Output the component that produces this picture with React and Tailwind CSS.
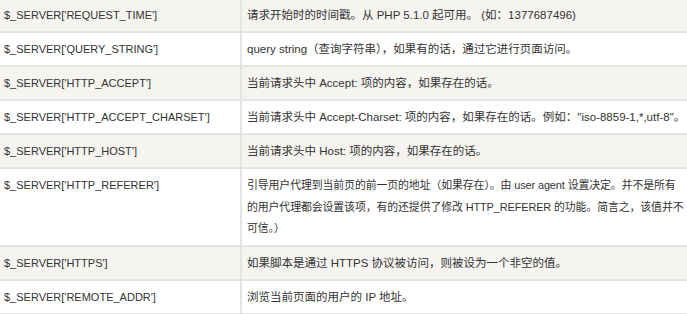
const rows = [
  { key: "$_SERVER['REQUEST_TIME']", desc: ['请求开始时的时间戳。从 PHP 5.1.0 起可用。 (如：1377687496)'] },
  { key: "$_SERVER['QUERY_STRING']", desc: ['query string（查询字符串），如果有的话，通过它进行页面访问。'] },
  { key: "$_SERVER['HTTP_ACCEPT']", desc: ['当前请求头中 Accept: 项的内容，如果存在的话。'] },
  { key: "$_SERVER['HTTP_ACCEPT_CHARSET']", desc: ['当前请求头中 Accept-Charset: 项的内容，如果存在的话。例如："iso-8859-1,*,utf-8"。'] },
  { key: "$_SERVER['HTTP_HOST']", desc: ['当前请求头中 Host: 项的内容，如果存在的话。'] },
  {
    key: "$_SERVER['HTTP_REFERER']",
    desc: [
      '引导用户代理到当前页的前一页的地址（如果存在）。由 user agent 设置决定。并不是所有',
      '的用户代理都会设置该项，有的还提供了修改 HTTP_REFERER 的功能。简言之，该值并不',
      '可信。）',
    ],
  },
  { key: "$_SERVER['HTTPS']", desc: ['如果脚本是通过 HTTPS 协议被访问，则被设为一个非空的值。'] },
  { key: "$_SERVER['REMOTE_ADDR']", desc: ['浏览当前页面的用户的 IP 地址。'] },
  { key: '', desc: [''] },
];

export default function App() {
  return (
    <main
      className="h-[314px] w-[687px] overflow-hidden bg-white text-[11px] text-[#333]"
      style={{ fontFamily: '"Liberation Sans", "Noto Sans CJK SC", sans-serif' }}
    >
      <div className="-mt-[1px]">
        {rows.map((row, index) => (
          <div
            key={index}
            className={`grid grid-cols-[242px_1fr] border-b-2 border-[#e4e4e2] ${
              index % 2 === 0 ? 'bg-[#f5f4f0]' : 'bg-white'
            }`}
          >
            <div className="border-r-2 border-[#e4e4e2] pl-[4px] pt-[6px] pb-[5px] leading-[21px] whitespace-nowrap">
              {row.key}
            </div>
            <div
              className={`pl-[5px] pt-[6px] pb-[5px] whitespace-nowrap ${
                row.desc.length > 1 ? 'text-[10.9px] leading-[21.7px] tracking-[-0.1px]' : 'text-[11.5px] leading-[21px]'
              }`}
            >
              {row.desc.map((line, i) => (
                <div key={i}>{line || '\u00a0'}</div>
              ))}
            </div>
          </div>
        ))}
      </div>
    </main>
  );
}
